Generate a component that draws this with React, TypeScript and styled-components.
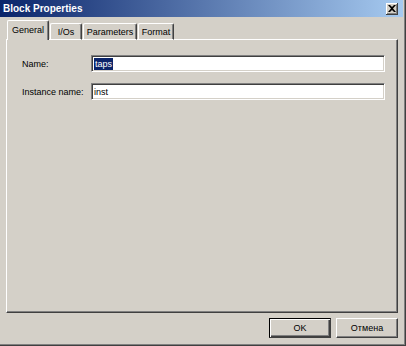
import styled, { createGlobalStyle } from 'styled-components'

const GlobalStyle = createGlobalStyle`
    html, body {
        margin: 0;
        padding: 0;
        background: #D4D0C8;
    }
    * {
        box-sizing: border-box;
    }
`

const Window = styled.div`
    width: 406px;
    height: 346px;
    background: #D4D0C8;
    display: flex;
    flex-direction: column;
    font-family: "Liberation Sans", Arial, sans-serif;
    font-size: 9px;
    color: #000;
    box-shadow: inset -1px -1px 0 #404040, inset -2px -2px 0 #808080;
    overflow: hidden;
`

const TitleBar = styled.div`
    height: 17px;
    margin-right: 3px;
    display: flex;
    align-items: center;
    justify-content: space-between;
    padding: 0 3px 0 3px;
    background: linear-gradient(to right, #0A246A, #A6CAF0);
    color: #fff;
    font-weight: bold;
    font-size: 10px;
`

const CloseButton = styled.div`
    width: 12px;
    height: 12px;
    margin-right: 2px;
    background: #D4D0C8;
    display: flex;
    align-items: center;
    justify-content: center;
    box-shadow: inset -1px -1px 0 #404040, inset 1px 1px 0 #fff, inset -2px -2px 0 #808080;
`

const Content = styled.div`
    flex: 1;
    display: flex;
    flex-direction: column;
    padding: 4px 8px 0 6px;
`

const TabRow = styled.div`
    display: flex;
    align-items: flex-end;
    height: 19px;
    padding-left: 1px;
    position: relative;
    z-index: 1;
    margin-bottom: -1px;
`

const Tab = styled.div<{ $active?: boolean; $width: number }>`
    width: ${p => p.$width}px;
    height: ${p => (p.$active ? '20px' : '17px')};
    padding-bottom: ${p => (p.$active ? '1px' : '0')};
    margin-right: 1px;
    display: flex;
    align-items: center;
    justify-content: center;
    white-space: nowrap;
    background: #D4D0C8;
    border-top: 1px solid #fff;
    border-left: 1px solid #fff;
    border-right: 1px solid #404040;
    box-shadow: inset -1px 0 0 #808080;
    border-radius: 2px 2px 0 0;
    border-bottom: ${p => (p.$active ? 'none' : '1px solid #fff')};
`

const Panel = styled.div`
    height: 274px;
    border-top: 1px solid #fff;
    border-left: 1px solid #fff;
    border-right: 1px solid #404040;
    border-bottom: 1px solid #404040;
    box-shadow: inset -1px -1px 0 #808080;
    padding: 15px 11px 0 15px;
    display: flex;
    flex-direction: column;
    gap: 11px;
`

const FieldRow = styled.div`
    display: flex;
    align-items: center;
    height: 17px;
`

const Label = styled.div`
    width: 69px;
`

const TextBox = styled.div`
    width: 294px;
    height: 17px;
    background: #fff;
    border-top: 1px solid #808080;
    border-left: 1px solid #808080;
    border-right: 1px solid #fff;
    border-bottom: 1px solid #fff;
    box-shadow: inset 1px 1px 0 #404040, inset -1px -1px 0 #D4D0C8;
    display: flex;
    align-items: center;
    padding-left: 2px;
`

const Selected = styled.span`
    background: #0A246A;
    color: #fff;
    padding: 0 1px;
    line-height: 12px;
`

const ButtonRow = styled.div`
    display: flex;
    justify-content: flex-end;
    gap: 5px;
    margin-top: 5px;
`

const Button = styled.div<{ $default?: boolean }>`
    width: 62px;
    height: 20px;
    display: flex;
    align-items: center;
    justify-content: center;
    background: #D4D0C8;
    border: 1px solid ${p => (p.$default ? '#000' : '#D4D0C8')};
    border-top-color: ${p => (p.$default ? '#000' : '#fff')};
    border-left-color: ${p => (p.$default ? '#000' : '#fff')};
    border-right-color: #404040;
    border-bottom-color: #404040;
    box-shadow: ${p =>
        p.$default
            ? 'inset 1px 1px 0 #fff, inset -1px -1px 0 #404040, inset -2px -2px 0 #808080'
            : 'inset -1px -1px 0 #808080'};
`

const App = () => {
    return (
        <>
            <GlobalStyle />
            <Window>
                <TitleBar>
                    <span>Block Properties</span>
                    <CloseButton>
                        <svg width="8" height="7" viewBox="0 0 8 7">
                            <path d="M0 0h2l2 2 2-2h2L5 3.5 8 7H6L4 5 2 7H0l3-3.5z" fill="#000" />
                        </svg>
                    </CloseButton>
                </TitleBar>
                <Content>
                    <TabRow>
                        <Tab $active $width={42}>General</Tab>
                        <Tab $width={32}>I/Os</Tab>
                        <Tab $width={54}>Parameters</Tab>
                        <Tab $width={36}>Format</Tab>
                    </TabRow>
                    <Panel>
                        <FieldRow>
                            <Label>Name:</Label>
                            <TextBox><Selected>taps</Selected></TextBox>
                        </FieldRow>
                        <FieldRow>
                            <Label>Instance name:</Label>
                            <TextBox>inst</TextBox>
                        </FieldRow>
                    </Panel>
                    <ButtonRow>
                        <Button $default>OK</Button>
                        <Button>Отмена</Button>
                    </ButtonRow>
                </Content>
            </Window>
        </>
    )
}

export default App
